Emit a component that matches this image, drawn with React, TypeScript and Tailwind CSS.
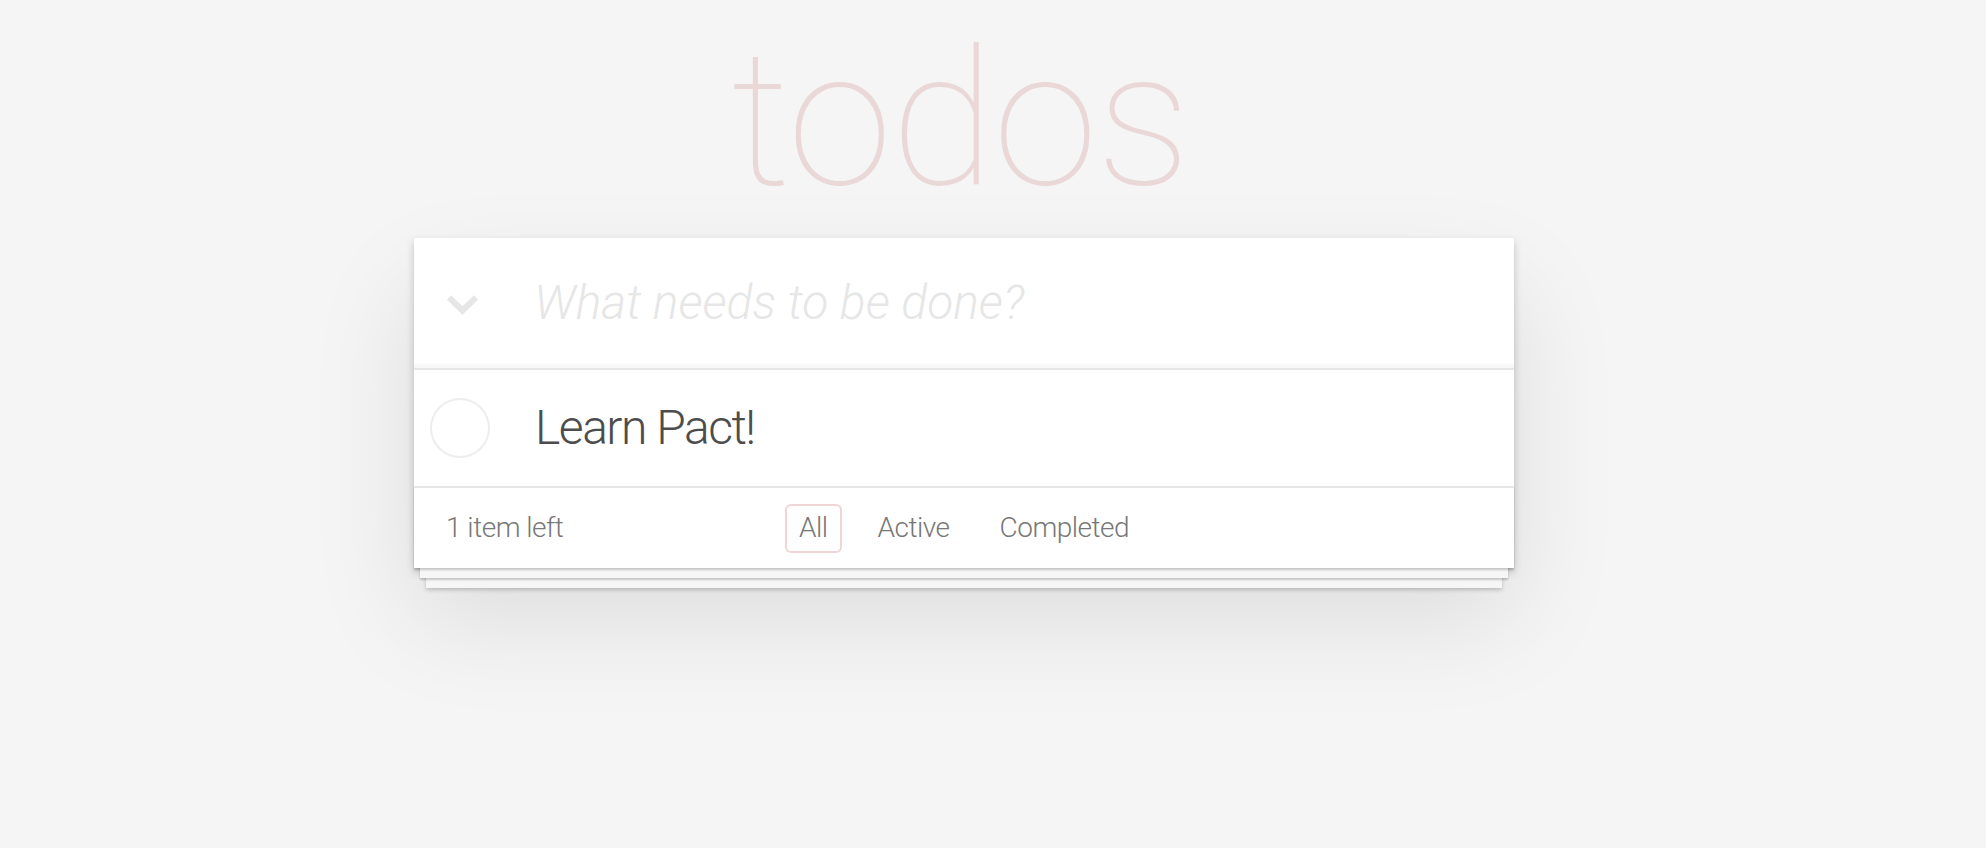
import { useState } from "react";

type Filter = "All" | "Active" | "Completed";

const stackShadow =
  "shadow-[0_2px_2px_rgba(0,0,0,0.2),0_16px_0_-6px_#f6f6f6,0_18px_2px_-6px_rgba(0,0,0,0.2),0_32px_0_-12px_#f6f6f6,0_34px_4px_-12px_rgba(0,0,0,0.2)]";

function Chevron() {
  return (
    <svg width="31" height="20" viewBox="0 0 31 20" className="block">
      <polyline
        points="2,2.5 15.5,15.5 29,2.5"
        fill="none"
        stroke="#e6e6e6"
        strokeWidth="6"
        strokeLinejoin="miter"
      />
    </svg>
  );
}

function Toggle() {
  return (
    <svg width="60" height="60" viewBox="0 0 60 60" className="block">
      <circle cx="30" cy="30" r="29" fill="none" stroke="#ededed" strokeWidth="2" />
    </svg>
  );
}

export default function App() {
  const [filter, setFilter] = useState<Filter>("All");
  const [text, setText] = useState("");
  const filters: Filter[] = ["All", "Active", "Completed"];

  return (
    <div className="min-h-screen bg-[#f5f5f5] font-['Roboto','Helvetica_Neue',Arial,sans-serif] font-light">
      <div className="flex flex-col items-center pr-[58px]">
        {/* Title */}
        <h1 className="pt-[24px] pr-[8px] text-[190px] leading-none font-thin tracking-[-1.5px] text-[rgba(175,47,47,0.15)] select-none">
          todos
        </h1>

        {/* App box */}
        <section className="mt-[24px] w-[1100px] bg-white shadow-[0_4px_8px_0_rgba(0,0,0,0.2),0_50px_100px_0_rgba(0,0,0,0.1)]">
          <header className="flex h-[130px] items-center shadow-[inset_0_-4px_2px_rgba(0,0,0,0.03)]">
            <div className="flex w-[120px] pl-[33px] pt-[4px]">
              <Chevron />
            </div>
            <input
              value={text}
              onChange={(e) => setText(e.target.value)}
              placeholder="What needs to be done?"
              className="flex-1 bg-transparent pr-[32px] text-[48px] leading-[1.4] text-[#4d4d4d] outline-none placeholder:italic placeholder:font-light placeholder:text-[#e6e6e6]"
            />
          </header>

          <ul className="border-t-2 border-[#e6e6e6]">
            <li className="flex h-[116px] items-center">
              <div className="flex w-[121px] pl-[16px]">
                <Toggle />
              </div>
              <span className="text-[48px] leading-[1.2] tracking-[-1.5px] text-[#4d4d4d]">Learn Pact!</span>
            </li>
          </ul>

          <footer
            className={`relative grid h-[82px] grid-cols-[1fr_auto_1fr] items-center border-t-2 border-[#e6e6e6] px-[32px] text-[28px] tracking-[-0.5px] text-[#777] ${stackShadow}`}
          >
            <span>1 item left</span>
            <ul className="flex items-center gap-[22px]">
              {filters.map((f) => (
                <li key={f}>
                  <button
                    onClick={() => setFilter(f)}
                    className={
                      f === filter
                        ? "flex h-[49px] items-center rounded-[6px] border-2 border-[rgba(175,47,47,0.2)] px-[12px] text-[#777]"
                        : "flex h-[49px] items-center rounded-[6px] border-2 border-transparent px-[12px] text-[#777]"
                    }
                  >
                    {f}
                  </button>
                </li>
              ))}
            </ul>
            <span />
          </footer>
        </section>
      </div>
    </div>
  );
}
